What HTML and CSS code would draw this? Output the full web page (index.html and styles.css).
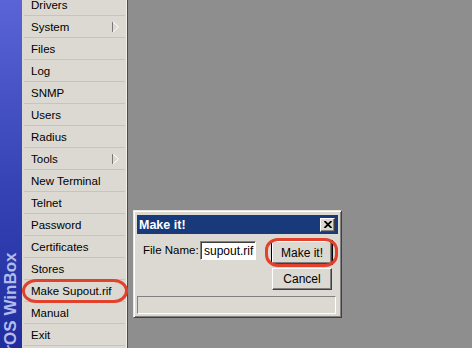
FILE: index.html
```html
<!DOCTYPE html>
<html>
<head>
<meta charset="utf-8">
<link rel="stylesheet" href="styles.css">
</head>
<body>
<div class="screen">
  <div class="strip"><span class="brand">MikroTik RouterOS WinBox</span></div>
  <ul class="menu">
    <li class="item">Drivers</li>
    <li class="item">System<span class="sub"><svg width="7" height="12" viewBox="0 0 7 12"><path d="M0.5 0.5 V11.5" stroke="#7a7a7a" fill="none"/><path d="M0.5 0.5 L6.5 6 L0.5 11.5" stroke="#ffffff" fill="none"/></svg></span></li>
    <li class="item">Files</li>
    <li class="item">Log</li>
    <li class="item">SNMP</li>
    <li class="item">Users</li>
    <li class="item">Radius</li>
    <li class="item">Tools<span class="sub"><svg width="7" height="12" viewBox="0 0 7 12"><path d="M0.5 0.5 V11.5" stroke="#7a7a7a" fill="none"/><path d="M0.5 0.5 L6.5 6 L0.5 11.5" stroke="#ffffff" fill="none"/></svg></span></li>
    <li class="item">New Terminal</li>
    <li class="item">Telnet</li>
    <li class="item">Password</li>
    <li class="item">Certificates</li>
    <li class="item">Stores</li>
    <li class="item">Make Supout.rif</li>
    <li class="item">Manual</li>
    <li class="item">Exit</li>
  </ul>
  <div class="desktop">
    <div class="dialog">
      <div class="titlebar">
        <span class="title">Make it!</span>
        <span class="close"><svg width="8" height="7" viewBox="0 0 8 7"><path d="M0.5 0 L7.5 7 M7.5 0 L0.5 7" stroke="#000" stroke-width="1.8" fill="none"/></svg></span>
      </div>
      <div class="dlg-body">
        <div class="field">
          <span class="label">File Name:</span>
          <span class="input">supout.rif</span>
        </div>
        <div class="buttons">
          <span class="btn btn-default">Make it!</span>
          <span class="btn">Cancel</span>
        </div>
      </div>
      <div class="status"></div>
    </div>
    <div class="mark mark-btn"></div>
  </div>
  <div class="mark mark-menu"></div>
</div>
</body>
</html>
```

FILE: styles.css
```css
html, body {
  margin: 0;
  padding: 0;
}
body {
  background: #8e8e8e;
  font-family: "Liberation Sans", Arial, sans-serif;
  font-size: 11px;
  color: #000;
}
.screen {
  position: relative;
  display: flex;
  width: 472px;
  height: 348px;
  overflow: hidden;
}
.strip {
  width: 22px;
  flex: none;
  background: linear-gradient(#5a64d6, #3442b4 55%, #1f2d9e);
  display: flex;
  flex-direction: column;
  align-items: center;
  overflow: hidden;
}
.brand {
  margin-top: 253px;
  writing-mode: vertical-rl;
  transform: rotate(180deg);
  white-space: nowrap;
  font-weight: bold;
  font-size: 17px;
  line-height: 18px;
  color: #b3bbeb;
  display: flex;
  justify-content: flex-end;
  flex: none;
  height: 240px;
}
.menu {
  list-style: none;
  margin: -6px 0 0 0;
  padding: 0;
  width: 105px;
  flex: none;
  height: 360px;
  background: #dcd9d2;
  border-right: 1px solid #4a4a4a;
  box-shadow: inset -1px 0 0 #f2f1ec;
}
.item {
  display: flex;
  align-items: center;
  height: 21px;
  margin: 0 2px;
  padding-left: 7px;
  border-bottom: 1px solid #c7c4bd;
  white-space: nowrap;
  font-size: 11.5px;
}
.sub {
  margin-left: auto;
  margin-right: 6px;
  display: flex;
}
.desktop {
  position: relative;
  flex: 1;
}
.dialog {
  position: absolute;
  left: 5px;
  top: 210px;
  width: 209px;
  height: 108px;
  box-sizing: border-box;
  background: #dcd9d2;
  border: 1px solid;
  border-color: #e8e6e0 #404040 #404040 #e8e6e0;
  box-shadow: inset 1px 1px 0 #ffffff, inset -1px -1px 0 #808080;
  padding: 4px 3px 3px 3px;
  display: flex;
  flex-direction: column;
}
.titlebar {
  height: 19px;
  background: #183a7a;
  display: flex;
  align-items: center;
  padding: 0 3px 0 2px;
  flex: none;
}
.title {
  color: #fff;
  font-weight: bold;
  font-size: 12.5px;
}
.close {
  margin-left: auto;
  width: 15px;
  height: 14px;
  box-sizing: border-box;
  background: #dcd9d2;
  border: 1px solid;
  border-color: #ffffff #404040 #404040 #ffffff;
  box-shadow: inset -1px -1px 0 #808080;
  display: flex;
  align-items: center;
  justify-content: center;
}
.dlg-body {
  display: flex;
  padding: 7px 6px 0 6px;
}
.field {
  display: flex;
  align-items: center;
  height: 18px;
}
.label {
  width: 57px;
  font-size: 11.5px;
}
.input {
  width: 56px;
  height: 19px;
  box-sizing: border-box;
  background: #fff;
  border: 1px solid;
  border-color: #808080 #ffffff #ffffff #808080;
  box-shadow: inset 1px 1px 0 #404040;
  padding: 2px 0 0 3px;
  font-size: 12px;
  line-height: 14px;
}
.buttons {
  margin-left: auto;
  display: flex;
  flex-direction: column;
  gap: 4px;
}
.btn {
  width: 60px;
  height: 22px;
  box-sizing: border-box;
  border: 1px solid;
  border-color: #ffffff #404040 #404040 #ffffff;
  box-shadow: inset -1px -1px 0 #808080;
  display: flex;
  align-items: center;
  justify-content: center;
  font-size: 12px;
}
.btn-default {
  height: 23px;
  outline: 1px solid #000;
  outline-offset: 0;
}
.status {
  margin: 6px 2px 0 0;
  height: 18px;
  box-sizing: border-box;
  border: 1px solid;
  border-color: #808080 #ffffff #ffffff #808080;
}
.mark {
  position: absolute;
  border: 3px solid #e2412b;
  box-sizing: border-box;
}
.mark-menu {
  left: 22px;
  top: 279px;
  width: 106px;
  height: 24px;
  border-radius: 14px / 12px;
}
.mark-btn {
  left: 137px;
  top: 238px;
  width: 73px;
  height: 29px;
  border-radius: 13px / 12px;
}
```
